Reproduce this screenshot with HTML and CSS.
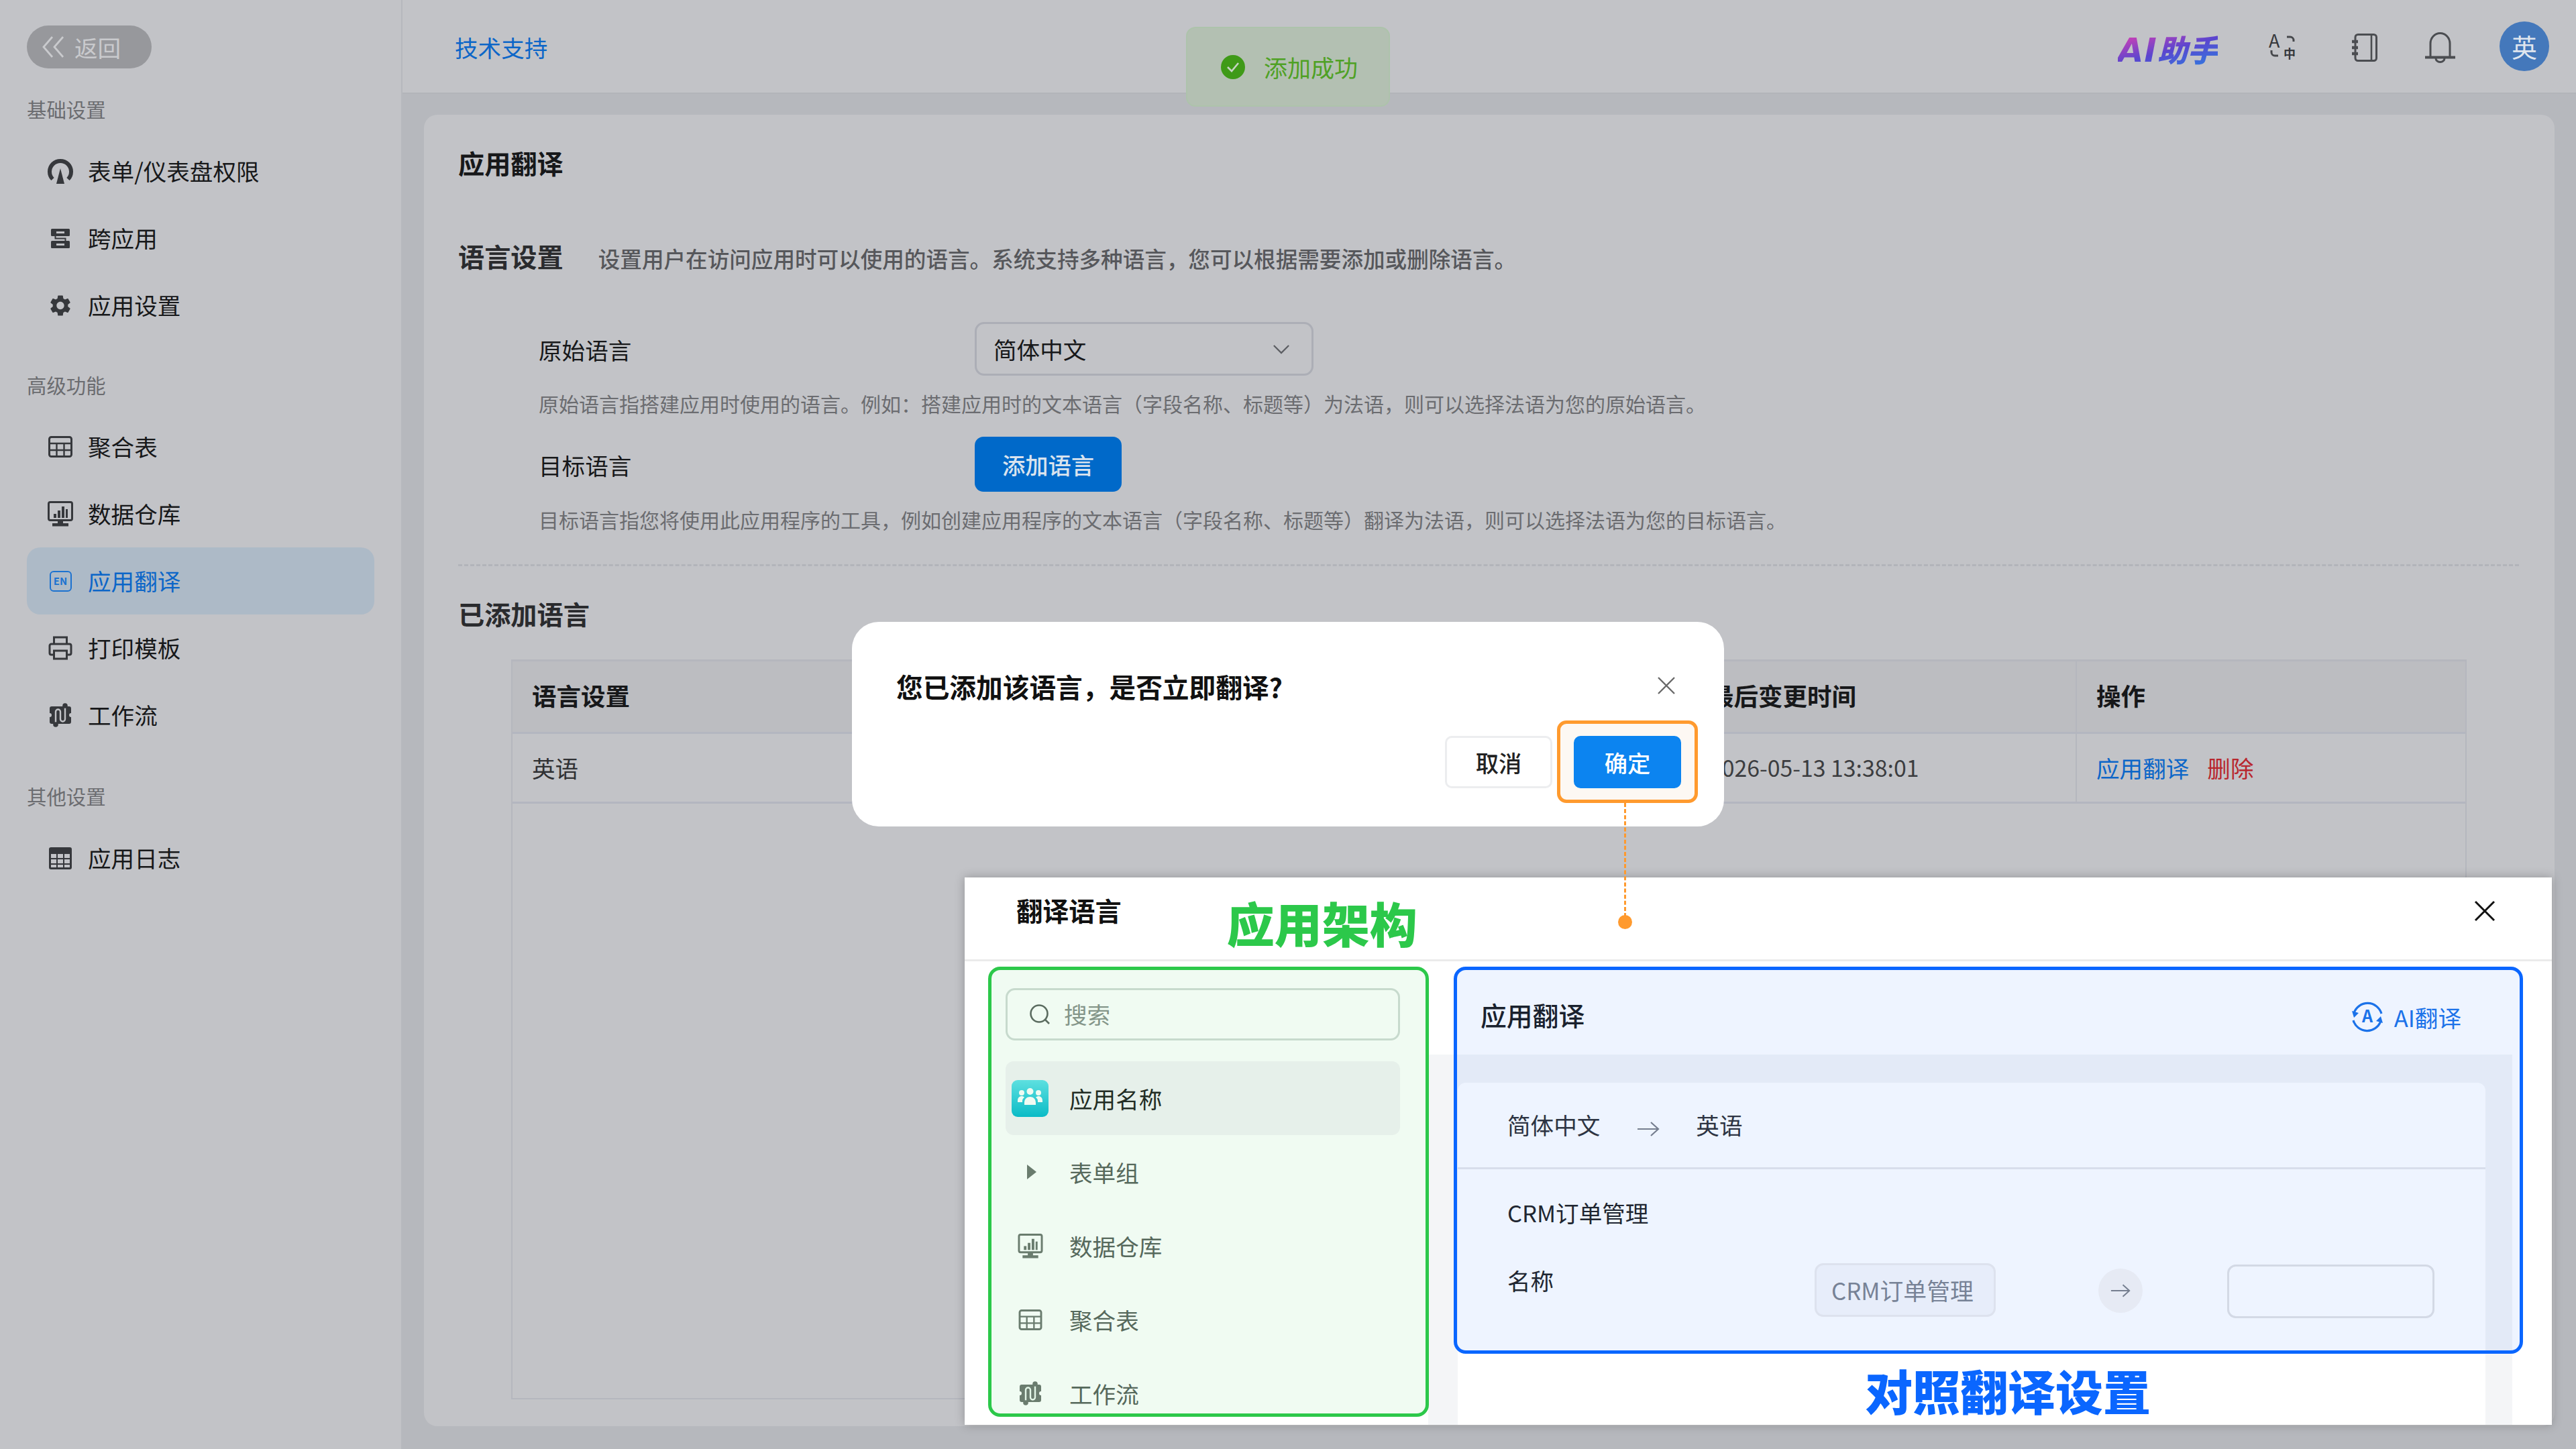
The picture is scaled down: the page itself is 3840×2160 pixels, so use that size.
FILE: index.html
```html
<!DOCTYPE html>
<html lang="zh-CN">
<head>
<meta charset="utf-8">
<title>应用翻译</title>
<link rel="stylesheet" href="styles.css">
</head>
<body>
<svg class="defs" aria-hidden="true">
  <symbol id="i-table" viewBox="0 0 36 32"><rect x="1.500" y="1.500" width="33" height="29" rx="3" fill="none" stroke="currentColor" stroke-width="3"/><path d="M2 11h32M2 21h32M12.500 11v19M23.500 11v19" fill="none" stroke="currentColor" stroke-width="2.400"/></symbol>
  <symbol id="i-monitor" viewBox="0 0 38 38"><rect x="1.500" y="1.500" width="35" height="27" rx="2.500" fill="none" stroke="currentColor" stroke-width="3"/><path d="M9 19h4v6H9zM15 14h4v11h-4zM21 8h4v17h-4zM27 12h3v13h-3zM15 29h8v4h-8zM7 33h24v4.500H7z" fill="currentColor"/></symbol>
  <symbol id="i-flow" viewBox="0 0 32 36"><path d="M3 5h26a3 3 0 0 1 3 3v7a3 3 0 0 0 0 6v7a3 3 0 0 1-3 3H3a3 3 0 0 1-3-3v-7a3 3 0 0 0 0-6V8a3 3 0 0 1 3-3z" fill="currentColor"/><path d="M9 30V13a3.500 3.500 0 0 1 7 0v11a3.500 3.500 0 0 0 7 0V5" fill="none" stroke="var(--ico-bg)" stroke-width="2.400"/><circle cx="23" cy="4" r="3.800" fill="currentColor"/><circle cx="9" cy="32" r="3.800" fill="currentColor"/></symbol>
</svg>

<div class="app">
  <aside class="sidebar">
    <a class="back">
      <svg class="back-ico" viewBox="0 0 32 32"><path d="M15 1 2 16l13 15M31 1 18 16l13 15" fill="none" stroke="currentColor" stroke-width="2.800"/></svg>
      <span>返回</span>
    </a>
    <section class="nav-group first">
      <h3>基础设置</h3>
      <a class="nav-item"><svg class="nav-ico h38" viewBox="0 0 38 38"><path d="M7.500 31A16 16 0 1 1 30.500 31" fill="none" stroke="currentColor" stroke-width="6"/><path d="M19 15 25 38H13z" fill="currentColor"/></svg><span>表单/仪表盘权限</span></a>
      <a class="nav-item"><svg class="nav-ico h29" viewBox="0 0 28 29"><path fill-rule="evenodd" fill="currentColor" d="M1.500 0h25A1.500 1.500 0 0 1 28 1.500v8a1.500 1.500 0 0 1-1.500 1.500h-25A1.500 1.500 0 0 1 0 9.500v-8A1.500 1.500 0 0 1 1.500 0zM8 4v3h12V4zM1.500 18h25a1.500 1.500 0 0 1 1.500 1.500v8a1.500 1.500 0 0 1-1.500 1.500h-25A1.500 1.500 0 0 1 0 27.500v-8A1.500 1.500 0 0 1 1.500 18zM8 22v3h12v-3z"/><path d="M6.500 11v3.500h15V18" fill="none" stroke="currentColor" stroke-width="2"/></svg><span>跨应用</span></a>
      <a class="nav-item"><svg class="nav-ico h33" viewBox="2 1.500 20 21"><path fill="currentColor" d="M19.140 12.940c.04-.3.06-.61.06-.94 0-.32-.02-.64-.07-.94l2.030-1.580a.49.49 0 0 0 .12-.61l-1.920-3.320a.488.488 0 0 0-.59-.22l-2.390.96c-.5-.38-1.030-.7-1.620-.94l-.36-2.540a.484.484 0 0 0-.48-.41h-3.840c-.24 0-.43.17-.47.41l-.36 2.540c-.59.24-1.130.57-1.620.94l-2.390-.96c-.22-.08-.47 0-.59.22L2.740 8.870c-.12.21-.08.47.12.61l2.030 1.580c-.05.3-.09.63-.09.94s.02.64.07.94l-2.030 1.580a.49.49 0 0 0-.12.61l1.920 3.320c.12.22.37.29.59.22l2.390-.96c.5.38 1.030.7 1.620.94l.36 2.540c.05.24.24.41.48.41h3.840c.24 0 .44-.17.47-.41l.36-2.540c.59-.24 1.130-.56 1.620-.94l2.390.96c.22.08.47 0 .59-.22l1.920-3.320c.12-.22.07-.47-.12-.61l-2.010-1.580zM12 15.600c-1.980 0-3.600-1.620-3.600-3.600s1.620-3.600 3.600-3.600 3.600 1.620 3.600 3.600-1.620 3.600-3.600 3.600z"/></svg><span>应用设置</span></a>
    </section>
    <section class="nav-group">
      <h3>高级功能</h3>
      <a class="nav-item"><svg class="nav-ico h32"><use href="#i-table"/></svg><span>聚合表</span></a>
      <a class="nav-item"><svg class="nav-ico h38"><use href="#i-monitor"/></svg><span>数据仓库</span></a>
      <a class="nav-item active"><b class="en-ico">EN</b><span>应用翻译</span></a>
      <a class="nav-item"><svg class="nav-ico h36" viewBox="0 0 35 36"><path d="M8 12V2h19v10M8 28H4a2.500 2.500 0 0 1-2.500-2.500v-11A2.500 2.500 0 0 1 4 12h27a2.500 2.500 0 0 1 2.500 2.500v11A2.500 2.500 0 0 1 31 28h-4M8 22h19v12H8z" fill="none" stroke="currentColor" stroke-width="3"/></svg><span>打印模板</span></a>
      <a class="nav-item"><svg class="nav-ico h36"><use href="#i-flow"/></svg><span>工作流</span></a>
    </section>
    <section class="nav-group last">
      <h3>其他设置</h3>
      <a class="nav-item"><svg class="nav-ico h33" viewBox="0 0 34 33"><path fill-rule="evenodd" fill="currentColor" d="M3 0h28a3 3 0 0 1 3 3v27a3 3 0 0 1-3 3H3a3 3 0 0 1-3-3V3a3 3 0 0 1 3-3zM3 10v6h8v-6zm10 0v6h8v-6zm10 0v6h8v-6zM3 18v6h8v-6zm10 0v6h8v-6zm10 0v6h8v-6zM3 26v4h8v-4zm10 0v4h8v-4zm10 0v4h8v-4z"/></svg><span>应用日志</span></a>
    </section>
  </aside>

  <div class="main">
    <header class="topbar">
      <a class="support">技术支持</a>
      <div class="tools">
        <span class="ai-logo"><span class="ai-latin">AI</span>助手</span>
        <svg class="tool tool-tr" viewBox="0 0 41 37">
          <text x="0" y="19" class="tr-a">A</text>
          <path d="M27 3h5a5 5 0 0 1 5 5v2M4 23v3a5 5 0 0 0 5 5h5" fill="none" stroke="#46484c" stroke-width="3"/>
          <text x="22" y="35" class="tr-z">中</text>
        </svg>
        <svg class="tool tool-book" viewBox="0 0 38 42"><rect x="5" y="1.500" width="31.500" height="39" rx="4" fill="none" stroke="#4b4d51" stroke-width="3"/><path d="M29 2v38" stroke="#4b4d51" stroke-width="2.600"/><path d="M0 12h9M0 21h9M0 30h9" stroke="#4b4d51" stroke-width="4.400"/></svg>
        <svg class="tool tool-bell" viewBox="0 0 45 45"><path d="M8 37V17a14.500 15.500 0 0 1 29 0v20" fill="none" stroke="#4b4d51" stroke-width="3"/><path d="M0 37.500h45" stroke="#4b4d51" stroke-width="4"/><path d="M16 39a6.500 5.500 0 0 0 13 0" fill="none" stroke="#4b4d51" stroke-width="3"/></svg>
        <span class="avatar">英</span>
      </div>
    </header>

    <main class="card">
      <h1 class="page-title">应用翻译</h1>
      <div class="section-head">
        <h2>语言设置</h2>
        <p>设置用户在访问应用时可以使用的语言。系统支持多种语言，您可以根据需要添加或删除语言。</p>
      </div>
      <div class="form">
        <div class="form-row">
          <label>原始语言</label>
          <div class="select"><span>简体中文</span><svg class="chev" viewBox="0 0 28 16"><path d="m2 2 12 12L26 2" fill="none" stroke="#5c5e63" stroke-width="2.400"/></svg></div>
        </div>
        <p class="help">原始语言指搭建应用时使用的语言。例如：搭建应用时的文本语言（字段名称、标题等）为法语，则可以选择法语为您的原始语言。</p>
        <div class="form-row second">
          <label>目标语言</label>
          <button class="primary-dim">添加语言</button>
        </div>
        <p class="help">目标语言指您将使用此应用程序的工具，例如创建应用程序的文本语言（字段名称、标题等）翻译为法语，则可以选择法语为您的目标语言。</p>
      </div>
      <hr class="dash">
      <h2 class="added">已添加语言</h2>
      <div class="table">
        <div class="th">语言设置</div>
        <div class="th">最后变更时间</div>
        <div class="th">操作</div>
        <div class="td">英语</div>
        <div class="td date">2026-05-13 13:38:01</div>
        <div class="td"><a class="link">应用翻译</a><a class="del">删除</a></div>
      </div>
    </main>
  </div>
</div>

<div class="toast">
  <svg class="toast-ico" viewBox="0 0 36 36"><circle cx="18" cy="18" r="18" fill="#3f9a18"/><path d="m10 18 6 6 10-12" fill="none" stroke="#c6d4c4" stroke-width="2.600"/></svg>
  <span>添加成功</span>
</div>

<div class="dialog">
  <div class="dialog-head">
    <h2>您已添加该语言，是否立即翻译?</h2>
    <svg class="x" viewBox="0 0 28 28"><path d="m2 2 24 24M26 2 2 26" stroke="#6a6a6a" stroke-width="2.400"/></svg>
  </div>
  <div class="dialog-foot">
    <button class="btn-cancel">取消</button>
    <span class="ok-wrap"><i class="ok-ring"></i><button class="btn-ok">确定</button></span>
  </div>
</div>

<div class="connector"></div>
<div class="connector-dot"></div>

<div class="panel">
  <div class="panel-head">
    <h2>翻译语言</h2>
    <strong class="callout green">应用架构</strong>
    <svg class="panel-x" viewBox="0 0 32 32"><path d="m2 2 28 28M30 2 2 30" stroke="#111" stroke-width="3"/></svg>
  </div>
  <div class="panel-body">
    <aside class="tree">
      <div class="search">
        <svg class="search-ico" viewBox="0 0 32 32"><circle cx="15" cy="15" r="12.500" fill="none" stroke="#5f6662" stroke-width="2.600"/><path d="m24 24 6 6" stroke="#5f6662" stroke-width="2.600"/></svg>
        <span class="search-text">搜索</span>
      </div>
      <div class="tree-row current">
        <span class="slot"><svg class="app-ico" viewBox="0 0 55 55"><defs><linearGradient id="g1" x1="0" y1="0" x2="0" y2="1"><stop offset="0" stop-color="#62e2ec"/><stop offset="1" stop-color="#09bbd0"/></linearGradient></defs><rect width="55" height="55" rx="9" fill="url(#g1)"/><g fill="#fff"><circle cx="15" cy="19" r="4"/><circle cx="27.500" cy="17" r="5"/><circle cx="40" cy="19" r="4"/><path d="M9 31c0-5 3-7 6-7 2 0 3 1 4 2-2 1-3 3-3 5v2H9zM46 31c0-5-3-7-6-7-2 0-3 1-4 2 2 1 3 3 3 5v2h7zM19 34c0-6 4-9 8.500-9s8.500 3 8.500 9v3H19z"/></g></svg></span>
        <span class="tree-label">应用名称</span>
      </div>
      <div class="tree-row">
        <span class="slot"><svg class="caret" viewBox="0 0 14 22"><path d="M0 0 14 11 0 22z" fill="#6f7772"/></svg></span>
        <span class="tree-label">表单组</span>
      </div>
      <div class="tree-row">
        <span class="slot"><svg class="tree-ico h37"><use href="#i-monitor"/></svg></span>
        <span class="tree-label">数据仓库</span>
      </div>
      <div class="tree-row">
        <span class="slot"><svg class="tree-ico h31"><use href="#i-table"/></svg></span>
        <span class="tree-label">聚合表</span>
      </div>
      <div class="tree-row">
        <span class="slot"><svg class="tree-ico h36"><use href="#i-flow"/></svg></span>
        <span class="tree-label">工作流</span>
      </div>
    </aside>
    <section class="pane">
      <div class="pane-head">
        <h3>应用翻译</h3>
        <a class="ai-link">
          <svg class="ai-ico" viewBox="0 0 50 50"><path d="M5 19A21.500 21.500 0 0 1 46 20M45 31A21.500 21.500 0 0 1 4 30" fill="none" stroke="#1d74e8" stroke-width="3.200"/><path d="M2 16l10 3-7 7zM48 34l-10-3 7-7z" fill="#1d74e8"/><text x="25" y="33" class="ai-a">A</text></svg>
          <span>AI翻译</span>
        </a>
      </div>
      <div class="pane-gray">
        <div class="sheet">
          <div class="lang-line">
            <span>简体中文</span>
            <svg class="arrow" viewBox="0 0 34 24"><path d="M1 12h31M21 2l11 10-11 10" fill="none" stroke="#7d8087" stroke-width="2.200"/></svg>
            <span class="lang-to">英语</span>
          </div>
          <div class="sheet-body">
            <div class="group-name">CRM订单管理</div>
            <div class="tr-row">
              <span class="field-name">名称</span>
              <span class="src">CRM订单管理</span>
              <span class="round"><svg class="arrow" viewBox="0 0 34 24"><path d="M1 12h31M21 2l11 10-11 10" fill="none" stroke="#7d8087" stroke-width="2.200"/></svg></span>
              <span class="dst"></span>
            </div>
          </div>
        </div>
      </div>
      <div class="hl-blue"></div>
      <strong class="callout blue">对照翻译设置</strong>
    </section>
    <div class="hl-green"></div>
  </div>
</div>
</body>
</html>
```
FILE: styles.css
```css
* { box-sizing: border-box; }
html, body { margin: 0; padding: 0; width: 3840px; height: 2160px; overflow: hidden; }
body { position: relative; font-family: "Noto Sans CJK SC", "Noto Sans", sans-serif; font-size: 34.600px; color: #17181a; background: #b6b8bd; }
h1, h2, h3, p { margin: 0; }
a { display: block; }
button { font-family: inherit; cursor: default; }
svg { overflow: visible; }
.defs { position: absolute; width: 0; height: 0; }

.app { display: flex; width: 3840px; height: 2160px; }

/* sidebar */
.sidebar { width: 600px; flex: none; background: #c2c3c7; border-right: 2px solid #b6b8bd; padding-top: 38px; --ico-bg: #c2c3c7; }
.back { display: flex; align-items: center; width: 186px; height: 64px; margin-left: 40px; padding-left: 23px; border-radius: 32px; background: #97989c; color: #c9cacd; line-height: 64px; }
.back-ico { width: 32px; height: 32px; margin-right: 16px; }
.nav-group { margin-top: 50px; padding: 0 40px; }
.nav-group.first { margin-top: 42px; }
.nav-group.last { margin-top: 52px; }
.nav-group h3 { height: 40px; font-size: 29.400px; font-weight: 400; line-height: 36px; color: #6b6c70; margin-bottom: 21px; }
.nav-item { display: flex; align-items: center; height: 100px; padding-left: 30px; border-radius: 20px; color: #17181a; }
.nav-item > span { margin-left: 21px; padding-bottom: 3px; }
.nav-ico { width: 40px; flex: none; color: #36383c; }
.h29 { height: 29px; }
.h31 { height: 31px; }
.h32 { height: 32px; }
.h33 { height: 33px; }
.h36 { height: 36px; }
.h37 { height: 37px; }
.h38 { height: 38px; }
.nav-item.active { background: #adbac7; color: #0c66c8; }
.en-ico { width: 33px; height: 31px; margin: 0 3.500px; flex: none; border: 2.500px solid #1c72d0; border-radius: 6px; font-size: 15px; line-height: 25px; text-align: center; font-weight: 700; color: #1c72d0; }

/* top bar */
.main { flex: 1; display: flex; flex-direction: column; min-width: 0; }
.topbar { height: 140px; flex: none; display: flex; align-items: center; justify-content: space-between; padding: 0 40px 0 78px; background: #c2c3c7; border-bottom: 2px solid #b2b4b9; }
.support { color: #0c66c8; margin-top: 2px; }
.tools { display: flex; align-items: center; }
.ai-logo { font-size: 45px; line-height: 54px; font-weight: 900; font-style: italic; background: linear-gradient(165deg, #d83fb2 8%, #5a46cf 52%, #2f7ce0 95%); -webkit-background-clip: text; background-clip: text; color: transparent; margin-top: 10px; white-space: nowrap; }
.ai-latin { font-family: "DejaVu Sans", sans-serif; font-size: 50px; font-weight: 700; letter-spacing: 1px; }
.tool { flex: none; }
.tool-tr { width: 41px; height: 37px; margin: 3px 0 0 76px; }
.tool-book { width: 38px; height: 42px; margin: 4px 0 0 83px; }
.tool-bell { width: 45px; height: 45px; margin: 3px 0 0 71px; }
.tr-a { font-size: 27px; fill: #36383c; }
.tr-z { font-size: 18px; font-weight: 700; fill: #36383c; }
.avatar { width: 74px; height: 74px; margin-left: 66px; border-radius: 50%; background: #4478bb; color: #dfe5ee; font-size: 38px; line-height: 74px; text-align: center; }

/* card */
.card { flex: 1; margin: 31px 32px 34px; padding: 43px 53px 0 51px; background: #c2c3c7; border-radius: 20px; }
.page-title { font-size: 39.200px; line-height: 56px; font-weight: 700; }
.section-head { display: flex; align-items: center; margin-top: 83px; height: 56px; }
.section-head h2 { font-size: 39.200px; font-weight: 700; color: #2a2b2e; }
.section-head p { margin-left: 52px; font-size: 32.600px; font-weight: 500; color: #56575b; padding-top: 6px; white-space: nowrap; }
.form { margin: 71px 0 0 120px; }
.form-row { display: grid; grid-template-columns: 650px auto; align-items: center; justify-content: start; }
.form-row label { padding-top: 2px; }
.select { width: 505px; height: 80px; display: flex; align-items: center; justify-content: space-between; padding: 0 32px 0 25px; border: 3px solid #acaeb6; border-radius: 14px; }
.chev { width: 26px; height: 15px; }
.help { margin-top: 19px; font-size: 30px; line-height: 44px; color: #6b6c70; white-space: nowrap; }
.help + .form-row { margin-top: 28px; }
.primary-dim { width: 219px; height: 82px; border: 0; border-radius: 13px; background: #0069c9; color: #d9e3ee; font-size: 34.300px; font-weight: 500; padding: 0; }
.dash { margin: 45px 0 0; border: 0; border-top: 3px dashed #b2b4ba; }
.added { margin-top: 42px; font-size: 39.200px; line-height: 56px; font-weight: 700; color: #2a2b2e; }
.table { display: grid; grid-template-columns: 1755px 575px 1fr; grid-template-rows: 108px 104px; margin: 41px 0 0 79px; width: 2915px; height: 1103px; border: 2px solid #b5b7be; border-top-width: 3px; }
.th { display: flex; align-items: center; padding: 0 0 5px 29px; background: #bcbdc1; font-size: 36.500px; font-weight: 700; border-bottom: 3px solid #b3b6c0; }
.th:nth-child(3), .td:nth-child(6) { border-left: 2px solid #b5b7be; }
.td { display: flex; align-items: center; padding: 0 0 2px 29px; border-bottom: 3px solid #b3b6c0; color: #303134; }
.date { color: #3c3d40; font-size: 33.800px; }
.link { color: #0c66c8; }
.del { color: #b8272e; margin-left: 27px; }

/* toast */
.toast { position: absolute; left: 1768px; top: 40px; width: 304px; height: 119px; display: flex; align-items: center; padding-left: 50px; background: #b3c0b2; border: 2px solid #adc3ab; border-radius: 14px; color: #4fa125; font-size: 35px; }
.toast-ico { width: 36px; height: 36px; margin-right: 28px; }

/* dialog */
.dialog { position: absolute; left: 1270px; top: 927px; width: 1300px; height: 305px; padding: 67px 64px 0 66px; background: #fff; border-radius: 40px; }
.dialog-head { display: flex; align-items: center; justify-content: space-between; height: 56px; }
.dialog-head h2 { font-size: 39.700px; font-weight: 700; color: #111; }
.x { width: 28px; height: 28px; margin: 0 8px 0 0; }
.dialog-foot { display: flex; justify-content: flex-end; align-items: center; gap: 31px; margin-top: 47px; }
.btn-cancel, .btn-ok { width: 160px; height: 78px; padding: 0; border-radius: 10px; font-size: 34.300px; font-weight: 500; }
.btn-cancel { background: #fff; border: 3px solid #ecedef; color: #222; margin-right: 1px; }
.ok-wrap { position: relative; display: block; height: 78px; }
.ok-ring { position: absolute; left: -25px; right: -25px; top: -23px; bottom: -22px; background: #fdf8f3; border: 5px solid #ff9a2e; border-radius: 14px; }
.btn-ok { position: relative; background: #0c84f0; border: 0; color: #fff; }

.connector { position: absolute; left: 2421px; top: 1197px; height: 170px; border-left: 3px dashed #ff9a2e; z-index: 3; }
.connector-dot { position: absolute; left: 2412px; top: 1364px; width: 21px; height: 21px; border-radius: 50%; background: #ff9a2e; z-index: 3; }

/* floating panel */
.panel { position: absolute; left: 1438px; top: 1308px; width: 2366px; height: 816px; background: #fff; box-shadow: 0 0 14px rgba(0,0,0,.25); display: flex; flex-direction: column; }
.panel-head { position: relative; height: 125px; flex: none; display: flex; align-items: flex-start; padding: 20px 0 0 77px; border-bottom: 3px solid #ebebeb; }
.panel-head h2 { font-size: 39.200px; line-height: 56px; font-weight: 700; color: #111; }
.callout { font-size: 71px; line-height: 100px; font-weight: 900; }
.callout.green { margin: -4px 0 0 157px; color: #2cc84a; }
.panel-x { width: 32px; height: 32px; margin: 14px 84px 0 auto; }
.panel-body { position: relative; flex: 1; display: flex; min-height: 0; }
.tree { width: 691px; flex: none; padding: 40px 0 0 61px; overflow: hidden; height: 691px; }
.search { display: flex; align-items: center; width: 588px; height: 78px; padding-left: 32px; border: 3px solid #d3dcd8; border-radius: 14px; color: #8b928e; }
.search-ico { width: 32px; height: 32px; margin-right: 20px; }
.search-text { padding-bottom: 2px; }
.tree-row { display: flex; align-items: center; width: 588px; height: 110px; padding-left: 9px; color: #5a625e; }
.search + .tree-row { margin-top: 31px; }
.tree-row.current { background: #f5f4f7; border-radius: 12px; color: #222; }
.slot { width: 55px; flex: none; margin-right: 31px; display: flex; justify-content: center; align-items: center; }
.app-ico { width: 55px; height: 55px; }
.caret { width: 14px; height: 22px; margin-left: 4px; }
.tree-ico { width: 40px; color: #6f7772; --ico-bg: #f1faf4; }
.pane { position: relative; flex: 1; padding-right: 59px; display: flex; flex-direction: column; min-width: 0; }
.pane-head { height: 139px; flex: none; display: flex; align-items: center; justify-content: space-between; padding: 0 76px 0 78px; }
.pane-head h3 { font-size: 38.800px; font-weight: 500; color: #1b1c1e; margin-top: 18px; }
.ai-link { display: flex; align-items: center; color: #1d74e8; margin-top: 26px; }
.ai-ico { width: 50px; height: 50px; margin-right: 15px; }
.ai-a { font-size: 25px; font-weight: 700; fill: #1d74e8; text-anchor: middle; }
.pane-gray { flex: 1; background: #f4f5f7; padding: 42px 40px 0 44px; min-height: 0; }
.sheet { height: 100%; background: #fff; border-radius: 12px 12px 0 0; }
.lang-line { display: flex; align-items: center; height: 129px; padding: 0 0 2px 74px; border-bottom: 3px solid #e8e8ea; color: #303134; }
.arrow { width: 34px; height: 24px; }
.lang-line .arrow { margin: 14px 54px 0 55px; }
.sheet-body { padding: 0 77px 0 74px; }
.group-name { line-height: 50px; margin-top: 39px; color: #222; }
.tr-row { position: relative; display: flex; align-items: flex-start; margin-top: 51px; }
.field-name { width: 458px; flex: none; margin-top: 0; line-height: 50px; color: #222; }
.src { width: 270px; height: 80px; flex: none; display: flex; align-items: center; padding-left: 22px; background: #f8f8fa; border: 3px solid #edeced; border-radius: 13px; color: #7f858f; white-space: nowrap; font-size: 34.800px; }
.round { width: 66px; height: 66px; flex: none; margin: 8px 0 0 153px; border-radius: 50%; background: #f7f5f4; display: flex; align-items: center; justify-content: center; }
.round .arrow { width: 30px; height: 22px; }
.dst { width: 309px; height: 80px; flex: none; margin: 2px 0 0 126px; border: 3px solid #e2e2e4; border-radius: 13px; }
.hl-green { position: absolute; left: 35px; top: 8px; width: 657px; height: 671px; background: rgba(44,200,74,.07); border: 5px solid #2cc84a; border-radius: 18px; pointer-events: none; }
.hl-blue { position: absolute; left: 38px; top: 8px; width: 1594px; height: 577px; background: rgba(10,102,255,.07); border: 5px solid #0a66ff; border-radius: 18px; pointer-events: none; }
.callout.blue { position: absolute; left: 651px; top: 588px; color: #0a66ff; }
```
